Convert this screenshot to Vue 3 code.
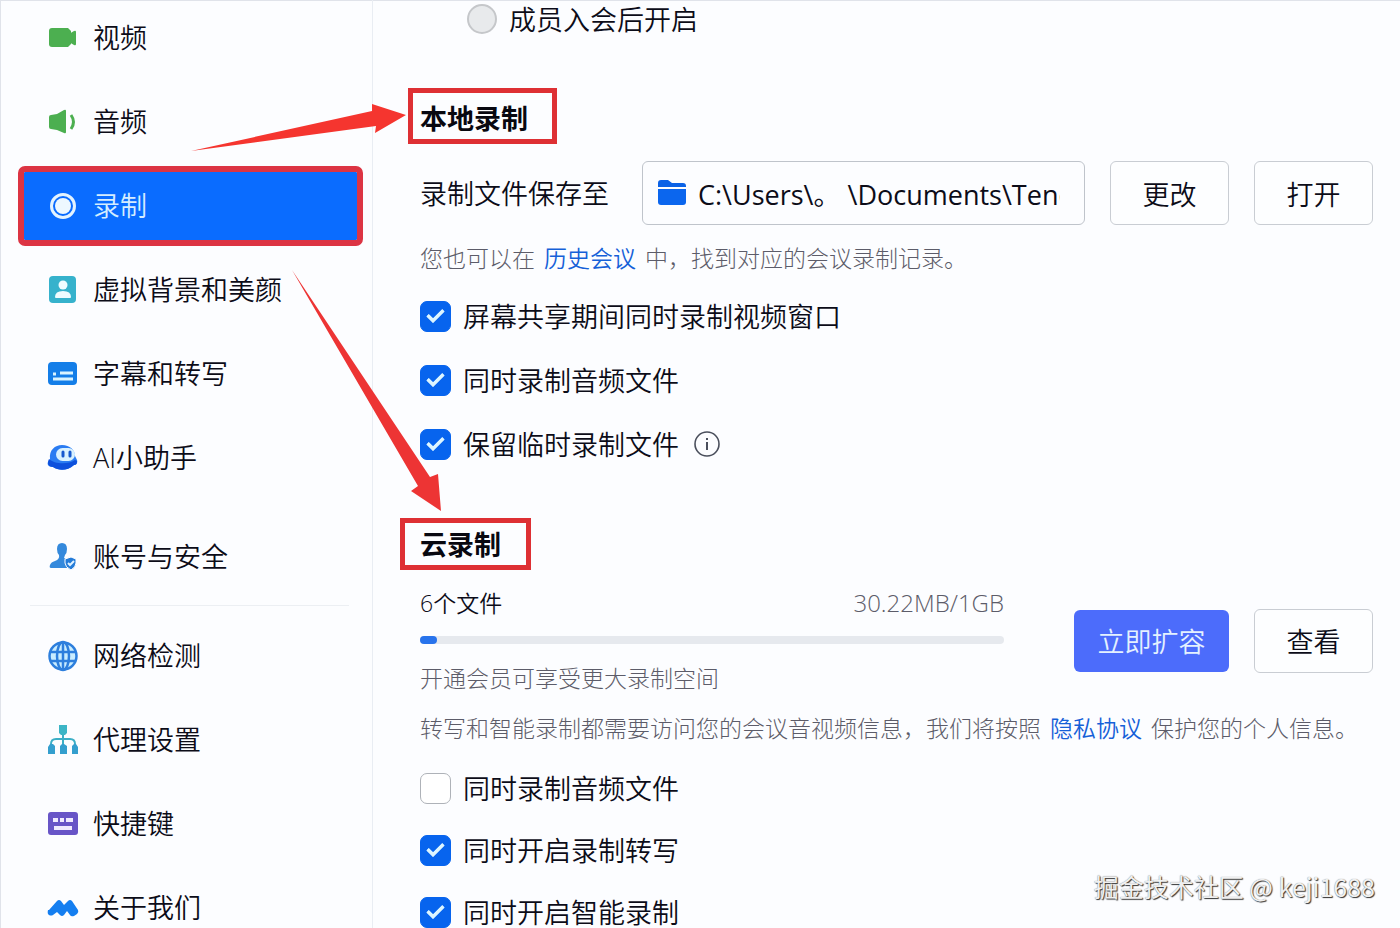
<script setup>
import { ref } from 'vue'

const active = ref('record')
const groups = [
  [
    { id: 'video', label: '视频' },
    { id: 'audio', label: '音频' },
    { id: 'record', label: '录制' },
    { id: 'beauty', label: '虚拟背景和美颜' },
    { id: 'caption', label: '字幕和转写' },
    { id: 'ai', label: 'AI小助手' },
  ],
  [{ id: 'account', label: '账号与安全' }],
  [
    { id: 'network', label: '网络检测' },
    { id: 'proxy', label: '代理设置' },
    { id: 'keys', label: '快捷键' },
    { id: 'about', label: '关于我们' },
  ],
]

const path = ref('C:\\Users\\。 \\Documents\\Tencent')
const localOptions = ref([
  { id: 'share', label: '屏幕共享期间同时录制视频窗口', on: true },
  { id: 'local-audio', label: '同时录制音频文件', on: true },
  { id: 'temp', label: '保留临时录制文件', on: true, info: true },
])
const cloudOptions = ref([
  { id: 'cloud-audio', label: '同时录制音频文件', on: false },
  { id: 'transcribe', label: '同时开启录制转写', on: true },
  { id: 'smart', label: '同时开启智能录制', on: true },
])
const usedPercent = (30.22 / 1024) * 100
</script>

<template>
  <div class="page">
    <nav class="sidebar">
      <div v-for="(group, g) in groups" :key="g" class="group">
        <button
          v-for="item in group"
          :key="item.id"
          type="button"
          class="item"
          :class="{ active: item.id === active }"
          @click="active = item.id"
        >
          <svg class="icon" viewBox="0 0 32 32" aria-hidden="true">
            <g v-if="item.id === 'video'" fill="#4caf50">
              <path d="M5 6h16l3 3v13l-3 3H5q-3 0-3-3V9q0-3 3-3z" />
              <path d="M22 12l5-3q2-1 2 1v12q0 2-2 1l-5-3z" />
            </g>
            <g v-else-if="item.id === 'audio'" fill="#4caf50">
              <path d="M4 9l6-1 7-4q2-1 2 1v21q0 2-2 1l-7-3-6-1q-2 0-2-2V11q0-2 2-2z" />
              <path d="M24 9q5 7 0 14" fill="none" stroke="#4caf50" stroke-width="3" />
            </g>
            <g v-else-if="item.id === 'record'">
              <circle cx="16" cy="16" r="11.5" fill="none" stroke="#e3f3ff" stroke-width="3" />
              <circle cx="16" cy="16" r="8" fill="#edf8ff" />
            </g>
            <g v-else-if="item.id === 'beauty'">
              <rect x="2" y="2" width="27" height="27" rx="4" fill="#36b2cc" />
              <circle cx="16" cy="11" r="4.5" fill="#effcff" />
              <path d="M8 23q0-6 8-6t8 6q0 1-1 1H9q-1 0-1-1z" fill="#effcff" />
            </g>
            <g v-else-if="item.id === 'caption'">
              <rect x="1" y="4" width="29" height="23" rx="4" fill="#147ee8" />
              <path d="M6 16h3M13 15h13M6 21h20" stroke="#d9f4ff" stroke-width="3" />
            </g>
            <g v-else-if="item.id === 'ai'">
              <path d="M3 17C2 8 8 3 15 3c8 0 13 5 13 11l2 4c1 3-1 5-3 5-7 6-15 6-21 2-5 0-6-3-5-5z" fill="#2a7cf2" />
              <path d="M2 17c5 5 19 6 26 1l2 1c0 3-1 4-3 4-7 6-15 6-21 2-5 0-6-4-4-8z" fill="#0d50dc" />
              <rect x="9" y="6" width="19" height="13" rx="6.5" fill="#d8f1ff" />
              <path d="M16 10v4M23 10v4" stroke="#1558ce" stroke-width="3" stroke-linecap="round" />
            </g>
            <g v-else-if="item.id === 'account'">
              <path d="M10 8q0-6 5-6t5 6q0 4-2 6l-1 3 4 2v8H4q-2 0-1-3 1-3 5-4 5-2 4-6-2-2-2-6z" fill="#3489dc" />
              <path d="M18 18l6-2 5 2v4q0 4-5 7-6-3-6-7z" fill="#247bd8" stroke="#fcfdff" />
              <path d="M21 22l2 2 4-4" fill="none" stroke="#dff2ff" stroke-width="2" />
            </g>
            <g v-else-if="item.id === 'network'" fill="none" stroke="#2d7fdd" stroke-width="2.5">
              <circle cx="16" cy="16" r="13.5" fill="#c9edff" />
              <path d="M3 12h26M3 21h26M16 2v28" />
              <ellipse cx="16" cy="16" rx="6" ry="14" />
            </g>
            <g v-else-if="item.id === 'proxy'">
              <path d="M16 11v10M4 23v-3q0-5 5-5h14q5 0 5 5v3" fill="none" stroke="#3cafc6" stroke-width="2" />
              <path d="M12 1h8v8l-2 2h-4l-2-2z" fill="#3cb5c6" />
              <path d="M1 30v-7l2-3h3l2 2v8zM13 30v-8l2-2h2l3 2v8zM25 30v-8l2-2h2l2 3v7z" fill="#349fce" />
            </g>
            <g v-else-if="item.id === 'keys'">
              <rect x="1" y="4" width="30" height="23" rx="3" fill="#6855c7" />
              <path d="M6 12h5M13 12h4M19 12h7M7 20h18" stroke="#f0ebff" stroke-width="4" />
            </g>
            <path
              v-else
              d="M2 18l8-9q2-2 4 0l3 4 4-4q2-2 4 0l6 9q1 2-1 4l-3 2q-3 1-4-1l-3-4-3 4q-2 2-4 0l-3-3-4 3q-2 1-4 0-2-1-1-5z"
              fill="#147ef0"
            />
          </svg>
          <span>{{ item.label }}</span>
        </button>
      </div>
    </nav>

    <main class="content">
      <label class="radio-row">
        <input type="radio" name="auto-record" class="radio" disabled />
        <span class="text">成员入会后开启</span>
      </label>

      <h2 class="title title-local">本地录制</h2>

      <div class="file-row">
        <label for="save-path" class="file-label text">录制文件保存至</label>
        <div class="path-box">
          <svg class="folder" viewBox="0 0 28 28" aria-hidden="true">
            <path d="M0 8V4q0-3 3-3h7l4 3h11q3 0 3 3v1z" fill="#0b62e6" />
            <path d="M0 10h28v13q0 3-3 3H3q-3 0-3-3z" fill="#0b66ee" />
          </svg>
          <input id="save-path" v-model="path" type="text" class="path" readonly />
        </div>
        <button type="button" class="btn">更改</button>
        <button type="button" class="btn">打开</button>
      </div>

      <p class="note hint">您也可以在<a href="#history">历史会议</a>中，找到对应的会议录制记录。</p>

      <div class="checks checks-local">
        <div v-for="o in localOptions" :key="o.id" class="check-row">
          <input :id="o.id" v-model="o.on" type="checkbox" class="box" />
          <label :for="o.id" class="text">{{ o.label }}</label>
          <svg v-if="o.info" class="info" viewBox="0 0 26 26" aria-hidden="true">
            <circle cx="13" cy="13" r="12" fill="none" stroke="#4a4f5c" stroke-width="1.6" />
            <path d="M13 11v8M13 7v2" stroke="#4a4f5c" stroke-width="2" />
          </svg>
        </div>
      </div>

      <h2 class="title title-cloud">云录制</h2>

      <div class="storage">
        <div class="usage">
          <div class="usage-head">
            <span>6个文件</span>
            <span class="quota">30.22MB/1GB</span>
          </div>
          <div class="track"><div class="fill" :style="{ width: usedPercent + '%' }"></div></div>
          <p class="note upgrade">开通会员可享受更大录制空间</p>
        </div>
        <button type="button" class="btn primary">立即扩容</button>
        <button type="button" class="btn">查看</button>
      </div>

      <p class="note privacy">转写和智能录制都需要访问您的会议音视频信息，我们将按照<a href="#privacy">隐私协议</a>保护您的个人信息。</p>

      <div class="checks checks-cloud">
        <div v-for="o in cloudOptions" :key="o.id" class="check-row">
          <input :id="o.id" v-model="o.on" type="checkbox" class="box" />
          <label :for="o.id" class="text">{{ o.label }}</label>
        </div>
      </div>
    </main>

    <svg class="arrows" width="460" height="520" viewBox="0 0 460 520" aria-hidden="true">
      <path d="M191 151L372 111V104L406 115L375 133L376 126Z" fill="#f5352f" />
      <path d="M292 270L430 477L438 474L441 511L411 491L418 486Z" fill="#ed3434" />
    </svg>
    <div class="watermark">掘金技术社区 @ keji1688</div>
  </div>
</template>

<style>
body {
  margin: 0;
  overflow: hidden;
}
</style>

<style scoped>
.page {
  position: relative;
  display: flex;
  height: 100vh;
  overflow: hidden;
  box-sizing: border-box;
  background: #fcfdff;
  box-shadow: inset 1px 1px 0 #e0e3ea;
  color: #0c0c18;
  font-family: "Open Sans", "Noto Sans CJK SC", sans-serif;
  font-size: 27px;
  font-weight: 350;
  line-height: 32px;
}

button,
input {
  font: inherit;
  color: inherit;
}

.text {
  padding-top: 2px;
}

.sidebar {
  flex: none;
  width: 373px;
  box-sizing: border-box;
  padding: 4px 15px 0 24px;
  border-right: 1px solid #e9edf3;
}

.group {
  display: flex;
  flex-direction: column;
  gap: 16px;
}

.group + .group {
  margin-top: 31px;
}

.group:last-child {
  margin: 14px 8px 0 6px;
  padding-top: 16px;
  border-top: 1px solid #eceff3;
}

.group:last-child .item {
  margin-left: -6px;
}

.item {
  display: flex;
  align-items: center;
  gap: 14px;
  height: 68px;
  padding: 0 0 0 23px;
  border: 0;
  background: none;
  text-align: left;
}

.icon {
  flex: none;
  width: 32px;
  height: 32px;
}

.item.active {
  background: #0a6cff;
  color: #d5edff;
  outline: 6px solid #dc3443;
  border-radius: 1px;
}

.content {
  flex: 1;
  min-width: 0;
  padding: 0 27px 0 47px;
}

.radio-row {
  display: flex;
  align-items: center;
  gap: 12px;
  height: 38px;
  padding-left: 47px;
}

.radio {
  appearance: none;
  width: 30px;
  height: 30px;
  margin: 0;
  border: 2px solid #c5c7ca;
  border-radius: 50%;
  background: #e8eaec;
}

.title {
  display: flex;
  align-items: center;
  width: max-content;
  box-sizing: border-box;
  border: 5px solid #de3034;
  color: #080810;
  font-size: 27px;
  font-weight: 700;
}

.title-local {
  height: 56px;
  margin: 50px 0 0 -12px;
  padding: 6px 24px 0 7px;
}

.title-cloud {
  height: 52px;
  margin: 58px 0 0 -20px;
  padding: 2px 25px 0 15px;
}

.file-row {
  display: flex;
  align-items: center;
  gap: 25px;
  margin-top: 17px;
}

.file-label {
  margin-right: 8px;
}

.path-box {
  display: flex;
  flex: 1;
  min-width: 0;
  align-items: center;
  gap: 12px;
  height: 64px;
  box-sizing: border-box;
  padding: 0 24px 0 15px;
  border: 1px solid #bfc4cb;
  border-radius: 6px;
}

.folder {
  flex: none;
  width: 28px;
  height: 28px;
}

.path {
  flex: 1;
  min-width: 0;
  padding: 3px 0 0;
  border: 0;
  outline: 0;
  background: none;
  font-weight: 400;
}

.btn {
  flex: none;
  width: 119px;
  height: 64px;
  padding: 3px 0 0;
  border: 1px solid #c9cdd3;
  border-radius: 6px;
  background: #fdfeff;
}

.primary {
  width: 155px;
  height: 62px;
  border: 0;
  background: #4c6cfb;
  color: #e4f1ff;
}

.note {
  margin: 0;
  color: #5c5c69;
  font-size: 23px;
  font-weight: 300;
  white-space: nowrap;
}

.note a {
  margin: 0 9px;
  color: #1560d8;
  font-weight: 350;
  text-decoration: none;
}

.hint {
  margin-top: 17px;
}

.checks {
  display: flex;
  flex-direction: column;
}

.checks-local {
  gap: 32px;
  margin-top: 26px;
}

.checks-cloud {
  gap: 30px;
  margin-top: 28px;
}

.check-row {
  display: flex;
  align-items: center;
  gap: 12px;
  height: 32px;
}

.box {
  display: grid;
  place-items: center;
  appearance: none;
  flex: none;
  width: 31px;
  height: 31px;
  box-sizing: border-box;
  margin: 0;
  border: 1px solid #aeb2b8;
  border-radius: 7px;
  background: #fff;
}

.box:checked {
  border-color: #0764ee;
  background: #0764ee;
}

.box:checked::after {
  content: "";
  width: 13px;
  height: 6px;
  margin-bottom: 5px;
  border: solid #dcf5ff;
  border-width: 0 0 4px 4px;
  border-radius: 1px;
  transform: rotate(-45deg);
}

.info {
  width: 26px;
  height: 26px;
  margin-left: 3px;
}

.storage {
  display: flex;
  align-items: center;
  gap: 25px;
  margin-top: 17px;
}

.usage {
  flex: 1;
  margin-right: 45px;
}

.usage-head {
  display: flex;
  justify-content: space-between;
  font-size: 23px;
}

.quota {
  color: #5c5c69;
  font-size: 24px;
  font-weight: 300;
}

.track {
  height: 8px;
  margin-top: 17px;
  border-radius: 4px;
  background: #e6e9ee;
}

.fill {
  height: 100%;
  min-width: 15px;
  border-radius: 4px;
  background: #2873ec;
}

.upgrade {
  margin-top: 18px;
}

.privacy {
  margin-top: 18px;
}

.arrows {
  position: absolute;
  top: 0;
  left: 0;
  pointer-events: none;
}

.watermark {
  position: absolute;
  right: 25px;
  bottom: 26px;
  color: #f0f0f0;
  font-family: "Noto Sans CJK SC", sans-serif;
  font-size: 25px;
  font-weight: 400;
  text-shadow: 1px 1px 1px #333, 0 0 1px #777;
}
</style>
